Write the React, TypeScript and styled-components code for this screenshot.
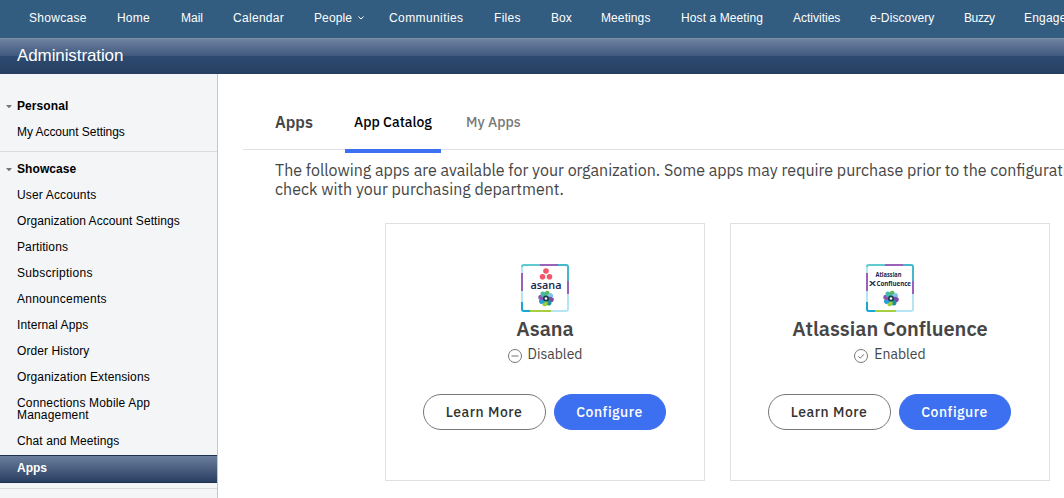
import React from "react";
import styled, { createGlobalStyle } from "styled-components";

const Global = createGlobalStyle`
  * { box-sizing: border-box; }
  body { margin: 0; background: #fff; overflow: hidden; font-family: "Liberation Sans", Arial, sans-serif; }
`;

const plex = `"IBM Plex Sans", "Noto Sans", sans-serif`;

const Page = styled.div`
  height: 498px;
  overflow: hidden;
  display: flex;
  flex-direction: column;
`;
const TopNav = styled.nav`
  flex: none;
  height: 38px;
  padding-left: 29px;
  display: flex;
  align-items: flex-start;
  background: #325c80;
  color: #fff;
  font-size: 12px;
  overflow: hidden;
`;
const NavItem = styled.a<{ $w: number; $ls: number }>`
  flex: 0 0 ${(p) => p.$w}px;
  display: flex;
  align-items: center;
  gap: 6px;
  height: 36px;
  white-space: nowrap;
  letter-spacing: ${(p) => p.$ls}px;
`;
const TitleBar = styled.header`
  flex: none;
  height: 36px;
  padding: 0 17px;
  border-top: 1px solid #808fa9;
  background: linear-gradient(#6e819f 0, #40597f 17px, #2d4a70 17px, #273f61 100%);
  color: #fff;
  font-size: 17px;
  letter-spacing: -0.1px;
  line-height: 33px;
`;
const Body = styled.div`
  flex: 1;
  display: flex;
  min-height: 0;
`;
const Sidebar = styled.aside`
  flex: 0 0 218px;
  border-right: 1px solid #c4c6c8;
  background: #f3f5f7;
  font-size: 12px;
  color: #000;
`;
const Section = styled.section<{ $top: number; $bottom: number }>`
  padding: ${(p) => p.$top}px 0 ${(p) => p.$bottom}px;
  border-bottom: 1px solid #d9dcde;
`;
const SectionTitle = styled.h2`
  margin: 0;
  height: 26px;
  display: flex;
  align-items: center;
  font-size: 12px;
  font-weight: 700;
  letter-spacing: 0.08px;
`;
const Arrow = styled.span`
  width: 17px;
  padding-left: 6px;
  display: flex;
`;
const SideLink = styled.a<{ $ls: number }>`
  display: block;
  padding: 7px 20px 7px 17px;
  line-height: 12px;
  letter-spacing: ${(p) => p.$ls}px;
`;
const ActiveLink = styled.a`
  display: block;
  margin-top: 1px;
  height: 28px;
  padding-left: 17px;
  line-height: 25px;
  font-weight: 700;
  color: #fff;
  border-top: 1px solid #1d3250;
  border-bottom: 1px solid #1d3250;
  background: linear-gradient(#6b7e9d, #293f62);
`;
const Main = styled.main`
  flex: 1;
  min-width: 0;
  padding-left: 25px;
  font-family: ${plex};
  color: #464646;
`;
const TabBar = styled.div`
  height: 76px;
  padding-left: 32px;
  border-bottom: 1px solid #dfe1e3;
  display: flex;
  align-items: flex-end;
`;
const Heading = styled.h1`
  margin: 0;
  width: 70px;
  height: 39px;
  font-size: 16px;
  line-height: 24px;
  font-weight: 600;
`;
const Tab = styled.a<{ $active?: boolean }>`
  width: ${(p) => (p.$active ? 96 : 110)}px;
  height: 43px;
  padding: 1px 0 0 9px;
  margin-bottom: -4px;
  line-height: 22px;
  font-size: 14px;
  font-weight: 500;
  white-space: nowrap;
  color: ${(p) => (p.$active ? "#000" : "#777")};
  border-bottom: 4px solid ${(p) => (p.$active ? "#3d70f0" : "transparent")};
  & + & { margin-left: 16px; }
`;
const Intro = styled.p`
  margin: 11px 0 0;
  padding-left: 32px;
  font-size: 16px;
  line-height: 19px;
  white-space: nowrap;
`;
const Cards = styled.div`
  display: flex;
  gap: 25px;
  padding: 24px 0 0 142px;
`;
const Card = styled.article`
  flex: 0 0 320px;
  height: 258px;
  border: 1px solid #e0e0e0;
  padding-top: 40px;
  display: flex;
  flex-direction: column;
  align-items: center;
`;
const CardTitle = styled.h3`
  margin: 3px 0 0;
  font-size: 20px;
  line-height: 28px;
  font-weight: 600;
`;
const Status = styled.div`
  display: flex;
  align-items: center;
  gap: 6px;
  height: 22px;
  font-size: 14px;
  svg { margin-top: 3px; }
`;
const Actions = styled.div`
  display: flex;
  gap: 8px;
  margin-top: 29px;
  padding-right: 2px;
`;
const Button = styled.button<{ $primary?: boolean }>`
  width: ${(p) => (p.$primary ? 112 : 123)}px;
  height: 36px;
  padding: 0;
  border-radius: 18px;
  border: 1px solid ${(p) => (p.$primary ? "#3d70f0" : "#777")};
  background: ${(p) => (p.$primary ? "#3d70f0" : "#fff")};
  color: ${(p) => (p.$primary ? "#fff" : "#323232")};
  font: 500 14px ${plex};
  letter-spacing: 0.5px;
`;

const nav: [string, number, number][] = [
  ["Showcase", 88, 0.3], ["Home", 64, 0.2], ["Mail", 52, 0], ["Calendar", 81, 0.3],
  ["People", 75, 0.1], ["Communities", 105, 0.4], ["Files", 57, 0.3], ["Box", 50, 0],
  ["Meetings", 80, 0.1], ["Host a Meeting", 112, 0.1], ["Activities", 77, 0],
  ["e-Discovery", 94, 0.1], ["Buzzy", 60, -0.4], ["Engage", 60, 0.2],
];
const links: [string, number][] = [
  ["User Accounts", 0.15], ["Organization Account Settings", 0.07], ["Partitions", 0.1],
  ["Subscriptions", 0.28], ["Announcements", 0.23], ["Internal Apps", 0.1],
  ["Order History", 0.08], ["Organization Extensions", 0.12],
  ["Connections Mobile App Management", 0.17], ["Chat and Meetings", 0.1],
];

const Triangle = () => (
  <Arrow><svg width="6" height="3"><path d="M0 0h6L3 3.4z" fill="#777" /></svg></Arrow>
);

const petals = ["#5dbb54", "#7fc6ea", "#7c4aa5", "#1e8f9b", "#9bcf3a", "#2a9fd8", "#8b56b0", "#48b9a8"];

function AppLogo({ kind }: { kind: "asana" | "confluence" }) {
  return (
    <svg width="48" height="48" viewBox="0 0 48 48" fontFamily="Open Sans, sans-serif" fill="#14264f">
      <rect width="48" height="48" rx="3" fill="#b5e4f3" />
      <path d="M3 0H19V3H0V3Q0 0 3 0z" fill="#5fcbd0" />
      <path d="M19 0h18v3H19z" fill="#9a62b8" />
      <path d="M37 0h8q3 0 3 3v14h-3V3h-8z" fill="#45b9c9" />
      <path d="M0 9h3v18H0z" fill="#9a62b8" />
      <path d="M0 38h3v7h6v3H3Q0 48 0 45z" fill="#18a7d6" />
      <path d="M9 45h21v3H9z" fill="#a5cf3f" />
      <path d="M45 17h3v13h-3z" fill="#9a62b8" />
      <rect x="2" y="2" width="44" height="44" rx="1" fill="#fff" />
      {kind === "asana" ? (
        <>
          <g fill="#f4566a"><circle cx="25" cy="7" r="2.8" /><circle cx="21.5" cy="12.7" r="2.8" /><circle cx="28.5" cy="12.7" r="2.8" /></g>
          <text x="9.5" y="25" fontSize="10.5" fontWeight="600" textLength="31" lengthAdjust="spacingAndGlyphs">asana</text>
        </>
      ) : (
        <>
          <text x="9.5" y="13" fontSize="6.5" fontWeight="700" textLength="26" lengthAdjust="spacingAndGlyphs">Atlassian</text>
          <text x="3" y="21.5" fontSize="7.5" fontWeight="700" textLength="7" lengthAdjust="spacingAndGlyphs">X</text>
          <text x="10.5" y="21.5" fontSize="7" fontWeight="700" textLength="34.5" lengthAdjust="spacingAndGlyphs">Confluence</text>
        </>
      )}
      <g transform="translate(25 34.5)">
        {petals.map((c, i) => (
          <ellipse key={i} cx="0" cy="-4.8" rx="2.6" ry="3.1" fill={c} transform={`rotate(${i * 45 + 12})`} />
        ))}
        <circle r="3" fill="#123f52" /><circle r="1.3" fill="#fff" />
      </g>
    </svg>
  );
}

const StatusIcon = ({ on }: { on: boolean }) => (
  <svg width="14" height="14" fill="none" stroke="#777">
    <circle cx="7" cy="7" r="6.5" />
    <path d={on ? "M4.2 7.2l2 2 3.8-4" : "M3.500 7h7"} />
  </svg>
);

function AppCard({ kind, name, on }: { kind: "asana" | "confluence"; name: string; on: boolean }) {
  return (
    <Card>
      <AppLogo kind={kind} />
      <CardTitle>{name}</CardTitle>
      <Status><StatusIcon on={on} />{on ? "Enabled" : "Disabled"}</Status>
      <Actions><Button>Learn More</Button><Button $primary>Configure</Button></Actions>
    </Card>
  );
}

export default function App() {
  return (
    <Page>
      <Global />
      <TopNav>
        {nav.map(([t, w, ls]) => (
          <NavItem key={t} $w={w} $ls={ls}>
            {t}
            {t === "People" && <svg width="6" height="4" fill="none" stroke="#fff"><path d="M.4.5L3 3 5.600.5" /></svg>}
          </NavItem>
        ))}
      </TopNav>
      <TitleBar>Administration</TitleBar>
      <Body>
        <Sidebar>
          <Section $top={19} $bottom={6}>
            <SectionTitle><Triangle />Personal</SectionTitle>
            <SideLink $ls={-0.05}>My Account Settings</SideLink>
          </Section>
          <Section $top={4} $bottom={5}>
            <SectionTitle><Triangle />Showcase</SectionTitle>
            {links.map(([t, ls]) => <SideLink key={t} $ls={ls}>{t}</SideLink>)}
            <ActiveLink>Apps</ActiveLink>
          </Section>
        </Sidebar>
        <Main>
          <TabBar>
            <Heading>Apps</Heading>
            <Tab $active>App Catalog</Tab>
            <Tab>My Apps</Tab>
          </TabBar>
          <Intro>
            The following apps are available for your organization. Some apps may require purchase prior to the configuration. Please<br />
            check with your purchasing department.
          </Intro>
          <Cards>
            <AppCard kind="asana" name="Asana" on={false} />
            <AppCard kind="confluence" name="Atlassian Confluence" on />
          </Cards>
        </Main>
      </Body>
    </Page>
  );
}
